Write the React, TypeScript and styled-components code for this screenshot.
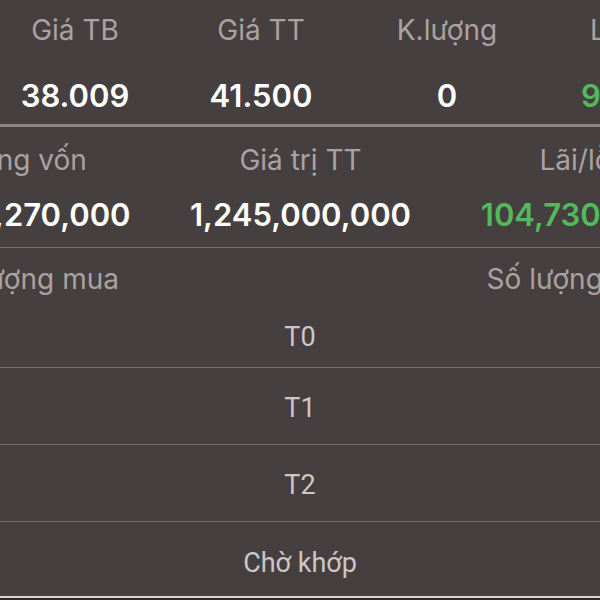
import { FC } from "react";
import styled, { createGlobalStyle } from "styled-components";

interface Stat {
  label: string;
  value: string;
  up?: boolean;
}

const topStats: Stat[] = [
  { label: "Giá TB", value: "38.009" },
  { label: "Giá TT", value: "41.500" },
  { label: "K.lượng", value: "0" },
  { label: "Lãi/lỗ", value: "9.19%", up: true },
];

const midStats: Stat[] = [
  { label: "Tổng vốn", value: "1,140,270,000" },
  { label: "Giá trị TT", value: "1,245,000,000" },
  { label: "Lãi/lỗ", value: "104,730,000", up: true },
];

const settlements = ["T0", "T1", "T2", "Chờ khớp"];

const App: FC = () => {
  return (
    <Screen>
      <GlobalStyle />
      <StatGrid columns="186px 186px 186px 172px" offset={-18} top={13} bottom={9}>
        {topStats.map((s) => (
          <Cell key={s.label} gap={30}>
            <Label>{s.label}</Label>
            <Value up={s.up}>{s.value}</Value>
          </Cell>
        ))}
      </StatGrid>
      <ThickDivider />
      <StatGrid columns="repeat(3, 275px)" offset={-112} top={16} bottom={13}>
        {midStats.map((s) => (
          <Cell key={s.label} gap={19}>
            <Label>{s.label}</Label>
            <Value up={s.up}>{s.value}</Value>
          </Cell>
        ))}
      </StatGrid>
      <Divider />
      <QtyHeader>
        <Label>Số lượng mua</Label>
        <span />
        <Label>Số lượng bán</Label>
      </QtyHeader>
      <List>
        {settlements.map((t, i) => (
          <Row key={t} first={i === 0}>
            {t}
          </Row>
        ))}
      </List>
      <BottomBar />
    </Screen>
  );
};

const GlobalStyle = createGlobalStyle`
  html, body {
    margin: 0;
    padding: 0;
    background: #463f3f;
    overflow: hidden;
  }
`;

const Screen = styled.div`
  width: 600px;
  height: 600px;
  overflow: hidden;
  background: #463f3f;
  font-family: Inter, "Noto Sans", sans-serif;
  display: flex;
  flex-direction: column;
`;

const StatGrid = styled.div<{
  columns: string;
  offset: number;
  top: number;
  bottom: number;
}>`
  display: grid;
  grid-template-columns: ${({ columns }) => columns};
  margin-left: ${({ offset }) => offset}px;
  padding-top: ${({ top }) => top}px;
  padding-bottom: ${({ bottom }) => bottom}px;
`;

const Cell = styled.div<{ gap: number }>`
  display: flex;
  flex-direction: column;
  align-items: center;
  gap: ${({ gap }) => gap}px;
  white-space: nowrap;
`;

const Label = styled.span`
  font-size: 28px;
  line-height: 34px;
  color: #aaa2a2;
  white-space: nowrap;
  text-align: center;
`;

const Value = styled.span<{ up?: boolean }>`
  font-size: 31px;
  line-height: 38px;
  font-weight: 600;
  color: ${({ up }) => (up ? "#52b95c" : "#ffffff")};
`;

const ThickDivider = styled.div`
  height: 3px;
  flex-shrink: 0;
  background: #8c8585;
`;

const Divider = styled.div`
  height: 1px;
  flex-shrink: 0;
  background: #776f6f;
`;

const QtyHeader = styled.div`
  display: grid;
  grid-template-columns: 275px 270px 275px;
  margin-left: -109px;
  padding: 14px 0 7px;
`;

const List = styled.div`
  display: flex;
  flex-direction: column;
`;

const Row = styled.div<{ first?: boolean }>`
  height: ${({ first }) => (first ? 65 : 77)}px;
  flex-shrink: 0;
  display: flex;
  align-items: center;
  justify-content: center;
  padding-top: 4px;
  font-family: Roboto, "Noto Sans", sans-serif;
  font-size: 27px;
  color: #cdc6c6;
  border-bottom: 1px solid #756d6d;
  box-sizing: border-box;

  &:last-child {
    height: 74px;
    padding-top: 7px;
    border-bottom: none;
  }
`;

const BottomBar = styled.div`
  height: 2px;
  flex-shrink: 0;
  background: #d9d3d3;
  border-bottom: 10px solid #2e2929;
`;

export default App;
